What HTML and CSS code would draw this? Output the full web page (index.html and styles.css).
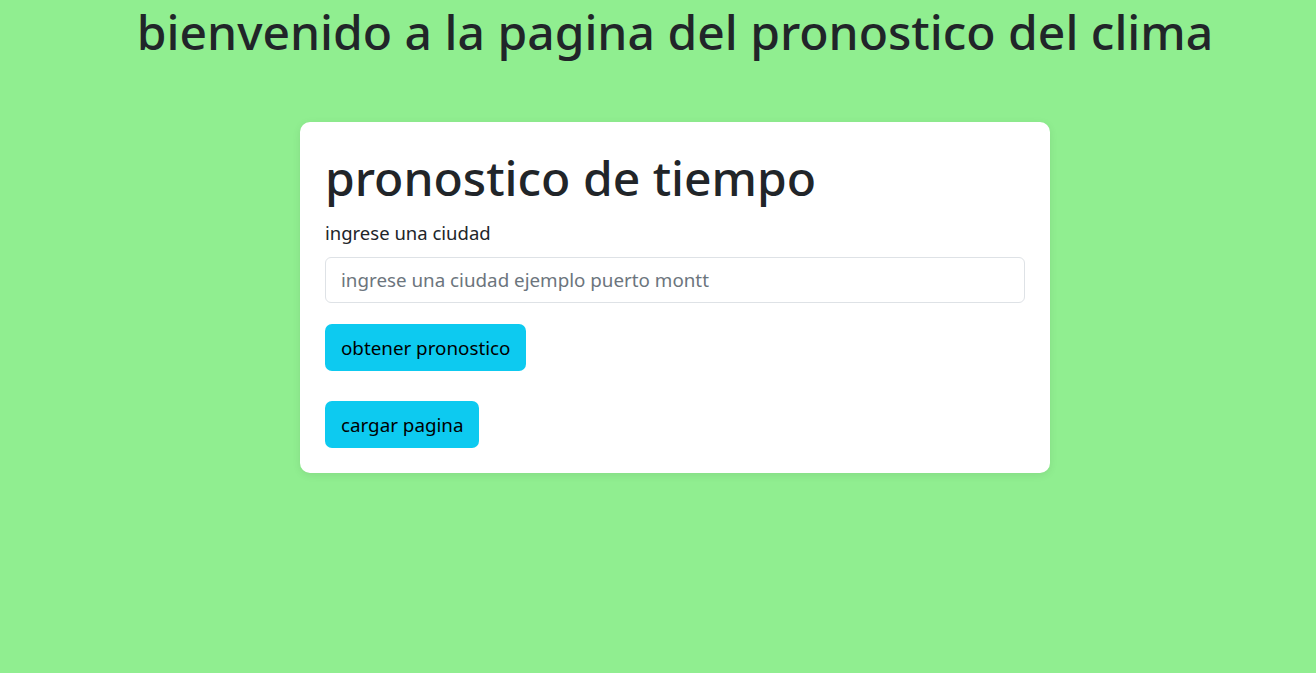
FILE: index.html
```html
<!DOCTYPE html>
<html lang="es">
<head>
<meta charset="utf-8">
<title>pronostico del clima</title>
<link rel="stylesheet" href="styles.css">
</head>
<body>
<div class="page">
  <h1 class="main-title">bienvenido a la pagina del pronostico del clima</h1>
  <div class="wrap">
    <div class="card">
      <h1 class="card-title">pronostico de tiempo</h1>
      <label class="label" for="ciudad">ingrese una ciudad</label>
      <input id="ciudad" class="input" type="text" placeholder="ingrese una ciudad ejemplo puerto montt">
      <div class="btn-row"><button class="btn">obtener pronostico</button></div>
      <div class="btn-row"><button class="btn">cargar pagina</button></div>
    </div>
  </div>
</div>
</body>
</html>
```

FILE: styles.css
```css
* { box-sizing: border-box; }
html, body {
  margin: 0;
  padding: 0;
}
body {
  background: #90ee90;
  color: #212529;
  font-family: "Noto Sans", "Open Sans", sans-serif;
  font-size: 16px;
  line-height: 1.5;
  height: 673px;
  overflow: hidden;
}
.page {
  padding-left: 34px;
}
.main-title {
  margin: 0;
  text-align: center;
  font-size: 48px;
  font-weight: 500;
  line-height: 64px;
}
.wrap {
  display: flex;
  justify-content: center;
  padding-top: 58px;
}
.card {
  width: 750px;
  background: #fff;
  border-radius: 10px;
  padding: 25px;
  box-shadow: 0 2px 8px rgba(0, 0, 0, 0.08);
  display: flex;
  flex-direction: column;
  align-items: stretch;
}
.card-title {
  margin: 0 0 12px;
  font-size: 48px;
  font-weight: 500;
  line-height: 62px;
}
.label {
  display: block;
  font-size: 18.5px;
  line-height: 24px;
  margin-bottom: 12px;
}
.input {
  display: block;
  width: 100%;
  height: 46px;
  padding: 0 15px;
  font-family: inherit;
  font-size: 18.8px;
  color: #212529;
  border: 1px solid #dee2e6;
  border-radius: 6px;
  outline: none;
}
.input::placeholder { color: #6c757d; }
.btn-row {
  display: flex;
  margin-top: 21px;
}
.btn-row + .btn-row { margin-top: 30px; }
.btn {
  height: 47px;
  padding: 0 16px;
  background: #0dcaf0;
  border: none;
  border-radius: 7px;
  color: #000;
  font-family: inherit;
  font-size: 18.8px;
  cursor: pointer;
}
```
